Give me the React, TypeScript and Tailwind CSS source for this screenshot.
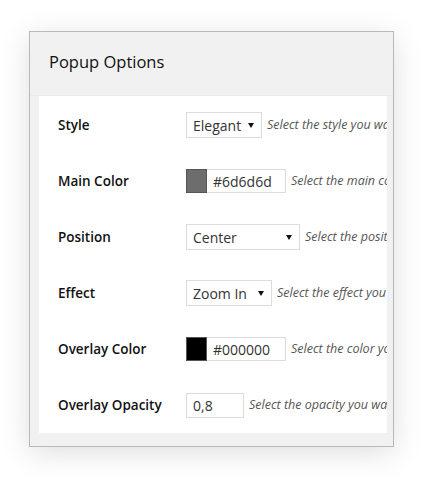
import type { ReactNode } from 'react'

const font = { fontFamily: '"Open Sans", "Noto Sans", Arial, sans-serif' }

function Arrow() {
  return (
    <svg width="6" height="5" viewBox="0 0 6 5" className="flex-shrink-0">
      <path d="M0 0H6L3 5Z" fill="#111" />
    </svg>
  )
}

function Select({ value, width }: { value: string; width: number }) {
  return (
    <div
      className="h-[26px] flex items-center justify-between pl-[6px] pr-[7px] border border-[#dcdcdc] bg-white flex-shrink-0 text-[14px] text-[#333]"
      style={{ width }}
    >
      <span>{value}</span>
      <Arrow />
    </div>
  )
}

function ColorInput({ color, value }: { color: string; value: string }) {
  return (
    <div className="flex items-center flex-shrink-0">
      <div className="w-[21px] h-[24px] border border-[#555]" style={{ background: color }} />
      <div className="w-[79px] h-[24px] flex items-center pl-[6px] border border-l-0 border-[#dcdcdc] text-[14px] text-[#333]">
        {value}
      </div>
    </div>
  )
}

function Row({ label, help, children }: { label: string; help: string; children: ReactNode }) {
  return (
    <div className="h-[56px] flex items-center">
      <div className="w-[128px] flex-shrink-0 text-[13.5px] font-semibold text-[#111]">{label}</div>
      {children}
      <div className="ml-[5px] text-[12.5px] italic text-[#555] whitespace-nowrap overflow-hidden">{help}</div>
    </div>
  )
}

export default function App() {
  return (
    <div className="w-[422px] h-[480px] bg-white pt-[31px] pl-[29px]" style={font}>
      <div className="w-[365px] h-[416px] bg-[#f1f1f1] border border-[#b9b9b9] shadow-[0_6px_28px_rgba(0,0,0,0.13)] flex flex-col">
        <div className="h-[64px] flex items-center pl-[19px] pb-[2px] border-b border-[#ebebeb]">
          <h2 className="text-[16.5px] font-medium text-[#111]">Popup Options</h2>
        </div>
        <div className="ml-[9px] mr-[6px] bg-white pl-[19px] pt-[1px] overflow-hidden">
          <Row label="Style" help="Select the style you want for the popup">
            <Select value="Elegant" width={76} />
          </Row>
          <Row label="Main Color" help="Select the main color of the popup">
            <ColorInput color="#6d6d6d" value="#6d6d6d" />
          </Row>
          <Row label="Position" help="Select the position of the popup">
            <Select value="Center" width={114} />
          </Row>
          <Row label="Effect" help="Select the effect you want for the popup">
            <Select value="Zoom In" width={86} />
          </Row>
          <Row label="Overlay Color" help="Select the color you want for the overlay">
            <ColorInput color="#000000" value="#000000" />
          </Row>
          <Row label="Overlay Opacity" help="Select the opacity you want for the overlay">
            <div className="w-[58px] h-[25px] flex items-center pl-[6px] border border-[#dcdcdc] text-[14px] text-[#333] flex-shrink-0">
              0,8
            </div>
          </Row>
        </div>
      </div>
    </div>
  )
}
